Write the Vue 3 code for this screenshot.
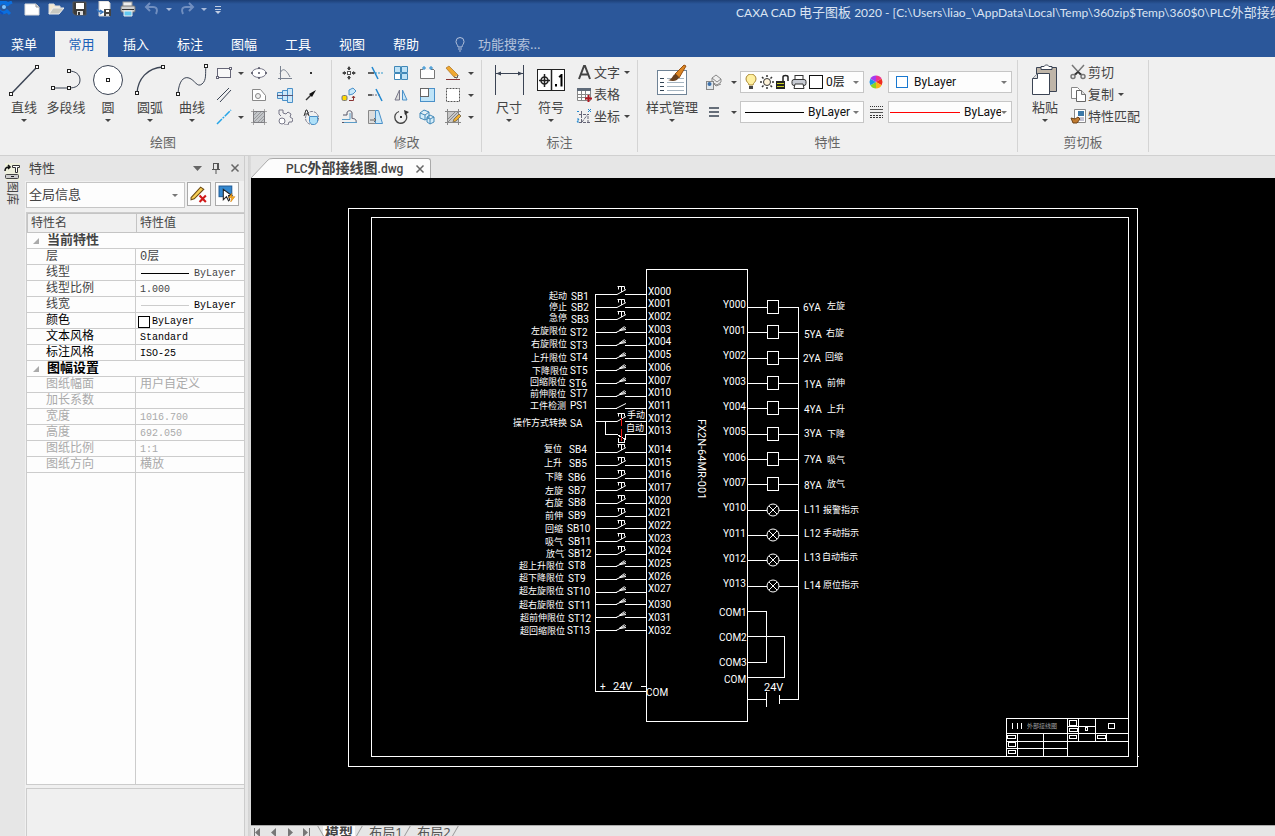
<script setup>
import { ref } from 'vue'

const tabs = ['菜单', '常用', '插入', '标注', '图幅', '工具', '视图', '帮助']
const activeTab = ref('常用')

const node = (x, y) => `<rect x="${x - 1.5}" y="${y - 1.5}" width="3" height="3" fill="#fff" stroke="#222"/>`
const ink = 'fill="none" stroke="#3b4454"'
const gray = 'fill="none" stroke="#7a8290"'
const blue = 'fill="#cfe8f8" stroke="#4a90c8"'

const icons = {
  logo: '<path d="M1 3a7 7 0 0 1 10 0M10 3l5-2M11 5a5 5 0 1 0-1 5l3 3" fill="none" stroke="#0b6fe0" stroke-width="3"/><circle cx="7" cy="6" r="2" fill="#7fc4ff"/><path d="M2 10l4 3M0 6l3 1" stroke="#0d4fc0" stroke-width="2"/>',
  newFile: '<path d="M1 3h11l3 3v8H1z" fill="#fff" stroke="#dcdcdc"/><path d="M12 3v3h3" fill="#ddd" stroke="#999"/>',
  open: '<path d="M1 13V3h5l1 2h5v3" fill="#f4e8d0" stroke="#ddd"/><path d="M1 13l4-6h11l-5 6z" fill="#c8c8c0" stroke="#eee"/>',
  save: '<path d="M1 1h13v13H3l-2-2z" fill="#3c3c3c" stroke="#555"/><rect x="4" y="2" width="8" height="6" fill="#fff"/><rect x="5" y="10" width="6" height="4" fill="#ddd"/><rect x="6" y="11" width="2" height="3" fill="#333"/>',
  saveAs: '<path d="M3 0h9l2 2v13H3z" fill="#fff" stroke="#ccc"/><path d="M1 8c1 3 3 3 5 3M4 9l3 2-3 2" fill="none" stroke="#3a78c0" stroke-width="1.5"/><rect x="8" y="8" width="7" height="7" fill="#444"/><rect x="10" y="9" width="3" height="2" fill="#fff"/><rect x="10" y="13" width="3" height="2" fill="#ddd"/>',
  printer: '<rect x="3" y="1" width="9" height="5" fill="#eee" stroke="#999"/><rect x="1" y="5" width="14" height="6" rx="1" fill="#d0d0d0" stroke="#777"/><rect x="2" y="8" width="12" height="1" fill="#333"/><path d="M4 10h8v5H4z" fill="#62c8f0" stroke="#eee"/>',
  undo: '<path d="M6 2L2 6l4 4M2 6h7c4 0 5 3 3 7" fill="none" stroke="#718fc0" stroke-width="2"/>',
  redo: '<path d="M10 2l4 4-4 4M14 6H7C3 6 2 9 4 13" fill="none" stroke="#718fc0" stroke-width="2"/>',
  custom: '<path d="M5 5.500h6M5 8.500h6" stroke="#c3cfe4"/><path d="M5 10h6l-3 3z" fill="#c3cfe4"/>',
  bulb: '<path d="M6 11c0-2-2-3-2-5.500a4 4 0 0 1 8 0C12 8 10 9 10 11zM6 13h4M7 15h2" fill="none" stroke="#b4c2dc"/>',

  line: `<path d="M4 29L29 3" ${ink} stroke-width="1.500"/>${node(3, 30)}${node(29, 3)}`,
  polyline: `<path d="M3 24H19c6 0 11-2 11-8s-5-9-11-9" ${ink}/>${node(3, 24)}${node(19, 24)}${node(19, 7)}`,
  circle: `<circle cx="16" cy="16" r="14.500" fill="#fff" stroke="#3b4454"/>${node(16, 16)}`,
  arc: `<path d="M3 29C4 15 13 4 29 3" ${ink} stroke-width="1.300"/>${node(3, 29)}${node(29, 3)}`,
  spline: `<path d="M2 29C3 18 7 12 13 14S21 24 26 20 29 9 30 2" ${ink}/>${node(2, 30)}${node(30, 2)}`,
  rect: `<rect x="1.500" y="3.500" width="13" height="9" fill="#f8f8f8" stroke="#667"/><rect x="0.500" y="11.500" width="2" height="2" fill="#fff" stroke="#667"/><rect x="13.500" y="2.500" width="2" height="2" fill="#fff" stroke="#667"/>`,
  ellipse: '<ellipse cx="8" cy="8" rx="7" ry="4.500" fill="#fff" stroke="#778"/><path d="M7 3h2M7 13h2M1 7v2M15 7v2M8 7v2" stroke="#556" stroke-width="1.500"/>',
  curve: `<path d="M3.500 1v14M1 13.500h14M3 9c2-7 6-5 10 3" ${gray}/>`,
  point: '<rect x="7" y="7" width="2" height="2" fill="#333"/>',
  parallel: `<path d="M1 13L13 1M4 15L15 3" ${ink}/>`,
  contour: `<path d="M1.500 2.500h8l5 6v5h-13z" fill="#fff" stroke="#888"/><circle cx="7" cy="9" r="2.500" fill="#eee" stroke="#888"/>`,
  shaft: `<path d="M0.500 5.500h5v6h-5zM5.500 3.500h5v10h-5zM10.500 1.500h5v14h-5z" ${blue}/><path d="M0 8.500h16" stroke="#557"/>`,
  arrow: '<path d="M3 13l5-5" stroke="#333" stroke-width="1.500"/><path d="M13 3L6 7l3 3z" fill="#111"/>',
  ray: '<path d="M1 15L15 1" stroke="#25a5e8" stroke-width="1.500" stroke-dasharray="7 1 2 1"/>',
  hatch: '<rect x="2.500" y="2.500" width="11" height="11" fill="#c2c5c9" stroke="#667"/><path d="M0 2.500h16M0 13.500h16M2.500 0v16M13.500 0v16M3 6l3-3M3 10l7-7M3 13l10-10M7 13l6-6M10 13l3-3" stroke="#888" stroke-width=".7"/>',
  gear: '<path d="M2 1h4v3l3 1 2-2 3 2-1 3 3 2-1 3h-3l-1 3H7" fill="none" stroke="#778"/><path d="M2 1v4l2 2" fill="none" stroke="#778"/><circle cx="5" cy="12" r="3" fill="#fff" stroke="#778"/>',
  detail: '<circle cx="9" cy="9" r="6.500" fill="none" stroke="#778" stroke-dasharray="3 1"/><path d="M6.500 7.500h8v3a4 4 0 0 1-8 2z" fill="#aee0f8" stroke="#4a90c8"/><path d="M1 7l2-6h1l2 6M2 5h3" fill="none" stroke="#333"/>',

  move: '<rect x="6.500" y="6.500" width="3" height="3" fill="#fff" stroke="#555"/><path d="M8 2v3M8 11v3M2 8h3M11 8h3" stroke="#444" stroke-width="2"/><path d="M6 4l2-3 2 3M6 12l2 3 2-3M4 6L1 8l3 2M12 6l3 2-3 2" fill="#444"/>',
  trim: '<path d="M1 8h6" stroke="#333" stroke-width="1.500"/><path d="M8 8h8" stroke="#39c" stroke-dasharray="2 1"/><path d="M5 2l6 12" stroke="#2389d0" stroke-width="1.500"/>',
  array: '<g fill="#bfe2f6" stroke="#4088b8"><path d="M1.500 1.500h6v6h-6zM8.500 1.500h6v6h-6zM8.500 8.500h6v6h-6z"/><path fill="#fff" d="M1.500 8.500h6v6h-6z"/></g>',
  stretch: '<path d="M1.500 5v8.500h14V5M1 4.500h3M12 4.500h3" fill="#fff" stroke="#777"/><path d="M5 1v4M12 1v4M3 3h4M10 3h4" stroke="#2389d0"/>',
  erase: '<path d="M1 3l3-2 9 9-1 3-3-1z" fill="#f0a830" stroke="#a87020" stroke-width=".7"/><path d="M9 12l3 1 1-3" fill="#eddcc4" stroke="#555"/><path d="M1 14.500h14" stroke="#833"/>',
  copyObj: '<rect x="1" y="8.500" width="5" height="5" rx="1.500" fill="#ffd900" stroke="#777"/><path d="M8 3l4-2 3 3-3 3-4 1z" fill="#c5e7fa" stroke="#4a90c8"/><path d="M8 13.500h4.500V9M11 11l1.500-2 1.500 2" fill="none" stroke="#833"/>',
  extend: '<path d="M1 8h4" stroke="#333" stroke-width="1.500"/><path d="M5 8h8" stroke="#667" stroke-dasharray="2 1"/><path d="M9 2l6 12" stroke="#2389d0" stroke-width="1.500"/>',
  mirror: '<path d="M6.500 3v10H2z" fill="#ddd" stroke="#778"/><path d="M9.500 3v10H14z" fill="#c8e6f8" stroke="#4a90c8"/>',
  scale: '<rect x="1.500" y="1.500" width="14" height="13" fill="#bfe4f8" stroke="#4a90c8"/><rect x="1.500" y="1.500" width="8" height="8" fill="#fff" stroke="#666"/>',
  break: '<rect x="1.500" y="1.500" width="13" height="13" fill="#fff" stroke="#555" stroke-dasharray="2 1"/>',
  offset: '<path d="M1 13.500h14c1-4-3-4-4-4V4c0-3-5-3-5 0v2H2" fill="none" stroke="#556"/><path d="M1 10.500h8V4M3 13.500h13" fill="none" stroke="#5b9cc8"/>',
  draft: '<path d="M1.500 1.500h7v13h-7z" fill="#ddd" stroke="#888"/><path d="M8.500 1.500h3l4 13h-7z" fill="#c8e6f8" stroke="#4a90c8"/><path d="M3 11h5M7 9l2 2-2 2" fill="none" stroke="#666"/>',
  rotate: '<path d="M6 2.500A6 6 0 1 0 12 4" fill="none" stroke="#444" stroke-width="1.300"/><path d="M11 1l5 2-4 3z" fill="#333"/><rect x="7" y="7" width="2" height="2" fill="#333"/>',
  block: '<path d="M1 4l4-3 5 2v6l-4 2-5-2zM8 8l3-2 4 2v5l-4 2-3-2zM1 4l5 2 4-3M6 6v5M8 8l3 2 4-2M11 10v5" fill="#d5edfa" stroke="#4389b8"/>',
  editHatch: '<rect x="2.500" y="2.500" width="11" height="11" fill="#c8c8c8" stroke="#666"/><path d="M0 2.500h16M0 13.500h16M2.500 0v16M13.500 0v16M3 10l7-7M3 13l10-10" stroke="#888"/><path d="M9 10l5-5 2 2-5 5-3 1z" fill="#f0b030" stroke="#875"/>',

  dim: `<path d="M2.500 1v30M30.500 1v30M3 9.500h27" ${ink}/><path d="M3 9.500l5-2v4zM30 9.500l-5-2v4z" fill="#3b4454"/>`,
  tol: '<rect x="2.500" y="5.500" width="27" height="21" fill="#fff" stroke="#222"/><path d="M16.500 5v22M4 16.500h11M9.500 10v13" stroke="#222" stroke-width="1.500"/><circle cx="9.500" cy="16.500" r="3.500" fill="none" stroke="#222" stroke-width="1.500"/><path d="M21 20v2.500M26.500 10v12.500M27 11l-3 2" stroke="#000" stroke-width="2" fill="none"/>',
  letterA: '<path d="M3 15L8 2h1l5 13M5 10.500h7" fill="none" stroke="#444" stroke-width="2"/>',
  table: '<path d="M1.500 2.500h13v12h-13z" fill="#fff" stroke="#888"/><path d="M1 2h14v3H1z" fill="#5f6b7a"/><path d="M1 8.500h14M1 11.500h14M5.500 5v10M9.500 5v10" stroke="#888"/><path d="M12.500 9v7M9 12.500h7" stroke="#b01822" stroke-width="2"/>',
  coord: '<path d="M5.500 3v11M3 6.500h10M6 14l6-8v8M3 14.500h12" fill="none" stroke="#667" stroke-dasharray="3 1"/><path d="M1 3l1 1 1-1M12 1l3 3M15 1l-3 3M1 11h2l-2 3h2" fill="none" stroke="#2389d0"/>',
  style: '<rect x="1.500" y="6.500" width="29" height="24" fill="#fff" stroke="#6f8396"/><path d="M4 14.500h4M4 18.500h4M4 22.500h4M4 26.500h4" stroke="#345"/><path d="M11 14.500h17M11 18.500h17M11 22.500h17M11 26.500h17" stroke="#a5b4c0"/><path d="M19 10l9-9 2 1-7 12z" fill="#d98422" stroke="#974f10"/><path d="M12 16c5 0 4-6 8-6l3 3c-1 4-6 5-11 3z" fill="#68401f"/>',
  layers: '<path d="M6 4l4-3 5 4-4 3zM6 4v4l5 3 4-3V5M7 9l3 3 5-2" fill="#eee" stroke="#888"/><rect x="0.500" y="7.500" width="7" height="8" fill="#e0e6ea" stroke="#888"/><circle cx="3.500" cy="10" r="2" fill="#3c6fa8"/>',
  weight: '<path d="M3 4h10M3 8h10M3 12h10" stroke="#394352" stroke-width="1.500"/>',
  linetype: '<path d="M2 2.500h13" stroke="#333" stroke-dasharray="1 1"/><path d="M2 5.500h13M2 8.500h13" stroke="#555"/><path d="M2 11.500h13M2 13.500h13" stroke="#333" stroke-dasharray="2 1"/>',
  lamp: '<path d="M6 11c0-2-3-3-3-6a5 5 0 0 1 10 0c0 3-3 4-3 6z" fill="#fff0a0" stroke="#a88632"/><path d="M6 12h4v3H6z" fill="#444"/>',
  sun: '<circle cx="8" cy="8" r="3.500" fill="#fff4da" stroke="#333"/><path d="M8 1v2M8 13v2M1 8h2M13 8h2M3 3l1.500 1.500M11.500 11.500L13 13M3 13l1.500-1.500M11.500 4.500L13 3" stroke="#333" stroke-width="1.500"/>',
  lock: '<path d="M1 7h9v8H1z" fill="#222"/><path d="M2 9.500h7M2 12.500h7" stroke="#c7cf22"/><path d="M8 7V3c0-2 5-2 5 0v4" fill="none" stroke="#222" stroke-width="1.500"/>',
  print2: '<rect x="4" y="1.500" width="8" height="5" fill="#fff" stroke="#333"/><rect x="1" y="5.500" width="14" height="6" rx="2" fill="#c7cbd3" stroke="#333"/><path d="M4 10h8l1 4.500H3z" fill="#fff" stroke="#333"/>',
  wheel: '<g transform="translate(8 8)"><path d="M0 0V-6.500A6.500 6.500 0 0 1 5.600-3.200z" fill="#ee3390"/><path d="M0 0L5.600-3.200A6.500 6.500 0 0 1 5.600 3.200z" fill="#ef2c20"/><path d="M0 0L5.600 3.200A6.500 6.500 0 0 1 0 6.500z" fill="#fbb515"/><path d="M0 0V6.500A6.500 6.500 0 0 1-5.600 3.200z" fill="#8bd424"/><path d="M0 0L-5.600 3.200A6.500 6.500 0 0 1-5.600-3.200z" fill="#1c93e8"/><path d="M0 0L-5.600-3.200A6.500 6.500 0 0 1 0-6.500z" fill="#a43cf0"/></g>',

  paste: '<path d="M7.500 3.500h20v24h-20z" fill="#bfb5a8" stroke="#3b4454"/><path d="M12 2.500h3c1-2 4-2 5 0h3v3H12z" fill="#fff" stroke="#3b4454"/><path d="M8.500 9.500h12v21h-17v-16z" fill="#fff" stroke="#3b4454"/><path d="M8.500 9.500v5h-5" fill="#ddd" stroke="#3b4454"/>',
  cut: '<path d="M2 1l9 10M14 1L5 11" stroke="#777" stroke-width="1.500"/><circle cx="3" cy="12.500" r="2" fill="#eee" stroke="#777" stroke-width="1.500"/><circle cx="13" cy="12.500" r="2" fill="#eee" stroke="#777" stroke-width="1.500"/><path d="M4 10l4-3 4 3-2 1-2-2-2 2z" fill="#333"/>',
  copy: '<path d="M1.500 1.500h6l2 2v9h-8z" fill="#fff" stroke="#888"/><path d="M6.500 4.500h5l4 4v7h-9z" fill="#fff" stroke="#666"/><path d="M11.500 4.500v4h4" fill="#ddd" stroke="#777"/>',
  match: '<path d="M4.500 1.500h11v13h-11z" fill="#fff" stroke="#888"/><rect x="8" y="3" width="6" height="5" fill="#3c78a8"/><path d="M7 10h7M10 12h4" stroke="#88a"/><path d="M1 10l4 1 3-2 2 2-3 4H3z" fill="#c07a30" stroke="#6f4315"/>',

  pencilX: '<path d="M1 12L10 2l3 2-9 9-3 1z" fill="#f8cf55" stroke="#6b4a13"/><path d="M9 10l6 6M15 10l-6 6" stroke="#d01818" stroke-width="2"/>',
  pick: '<rect x="1" y="1" width="12" height="10" fill="#3388d0" stroke="#1f5c98"/><path d="M5 4v10l3-3 2 4 1-1-1-4h3z" fill="#fff" stroke="#222"/><path d="M13 8l-3 4h3l-1 4 4-5h-3z" fill="#ffb020" stroke="#d07800" stroke-width=".5"/>',
  tee: '<rect x="1" y="0" width="15" height="17" fill="#eef0dc"/><path d="M1 8c0-3 1-4 4-4M4 2l2 2-2 2" fill="none" stroke="#111" stroke-width="1.500"/><path d="M8.500 2.500h7v2h-2v5h-2v-5h-3z" fill="#fff" stroke="#333"/><rect x="1.500" y="11.500" width="13" height="4" rx="1" fill="#ccc" stroke="#444"/><path d="M7 13.500h3" stroke="#222"/>',
  pin: '<path d="M5.500 3v6M10.500 3v6M5 3.500h6M4 9.500h8M8 10v4M9.500 4v5" fill="none" stroke="#555"/>',
  close: '<path d="M4.500 4.500l7 7M11.500 4.500l-7 7" stroke="#666" stroke-width="1.500"/>',
  down: '<path d="M4 6h9l-4.500 5z" fill="#666"/>',
  navFirst: '<path d="M3.500 3v9" stroke="#777"/><path d="M9 3v9L4 7.500z" fill="#777"/>',
  navPrev: '<path d="M9 3v9L4 7.500z" fill="#777"/>',
  navNext: '<path d="M5 3v9l5-4.500z" fill="#777"/>',
  navLast: '<path d="M10.500 3v9" stroke="#777"/><path d="M4 3v9l5-4.500z" fill="#777"/>'
}

const quick = ['newFile', 'open', 'save', 'saveAs', 'printer']
const drawBig = [
  ['直线', 'line', true], ['多段线', 'polyline', false], ['圆', 'circle', true],
  ['圆弧', 'arc', true], ['曲线', 'spline', true]
]
const drawSmall = [
  'rect', 'v', 'ellipse', 'curve', 'point',
  'parallel', '', 'contour', 'shaft', 'arrow',
  'ray', 'v', 'hatch', 'gear', 'detail'
]
const editSmall = [
  'move', 'trim', 'array', 'stretch', 'erase', 'v',
  'copyObj', 'extend', 'mirror', 'scale', 'break', 'v',
  'offset', 'draft', 'rotate', 'block', 'editHatch', 'v'
]

const rows = [
  { group: '当前特性' },
  { name: '层', value: '0层' },
  { name: '线型', value: 'ByLayer', line: 'dark' },
  { name: '线型比例', value: '1.000' },
  { name: '线宽', value: 'ByLayer', line: 'light', tone: 'mixed' },
  { name: '颜色', value: 'ByLayer', swatch: true, tone: 'strong' },
  { name: '文本风格', value: 'Standard', tone: 'strong' },
  { name: '标注风格', value: 'ISO-25', tone: 'strong' },
  { group: '图幅设置', tone: 'strong' },
  { name: '图纸幅面', value: '用户自定义', tone: 'off' },
  { name: '加长系数', value: '', tone: 'off' },
  { name: '宽度', value: '1016.700', tone: 'off' },
  { name: '高度', value: '692.050', tone: 'off' },
  { name: '图纸比例', value: '1:1', tone: 'off' },
  { name: '图纸方向', value: '横放', tone: 'off' }
]
const isLatin = (s) => /^[\x20-\x7e]*$/.test(s)

// PLC inputs: terminal, terminal y, wire y, kind, name, name x, name y, device, device x, device y
const inputs = [
  ['X000', 292, 294, 'b', '起动', 549, 296, 'SB1', 571, 297],
  ['X001', 304, 307, 'b', '停止', 549, 307, 'SB2', 571, 308],
  ['X002', 317, 319, 'b', '急停', 549, 318, 'SB3', 571, 320],
  ['X003', 330, 332, 's', '左旋限位', 531, 331, 'ST2', 570, 333],
  ['X004', 342, 345, 's', '右旋限位', 531, 344, 'ST3', 570, 346],
  ['X005', 355, 358, 's', '上升限位', 531, 358, 'ST4', 570, 358],
  ['X006', 368, 370, 's', '下降限位', 532, 371, 'ST5', 570, 371],
  ['X007', 381, 383, 's', '回缩限位', 530, 382, 'ST6', 569, 384],
  ['X010', 393, 396, 's', '前伸限位', 530, 394, 'ST7', 570, 394],
  ['X011', 406, 408, 'p', '工件检测', 530, 406, 'PS1', 570, 406],
  ['X012', 419, 421, 'b', '操作方式转换', 513, 423, 'SA', 570, 424],
  ['X013', 431, 434, '', '', 0, 0, '', 0, 0],
  ['X014', 450, 452, 'b', '复位', 544, 449, 'SB4', 569, 450],
  ['X015', 463, 465, 'b', '上升', 544, 463, 'SB5', 569, 464],
  ['X016', 475, 478, 'b', '下降', 545, 477, 'SB6', 568, 478],
  ['X017', 488, 490, 'b', '左旋', 545, 491, 'SB7', 568, 491],
  ['X020', 501, 503, 'b', '右旋', 545, 503, 'SB8', 568, 503],
  ['X021', 513, 516, 'b', '前伸', 545, 516, 'SB9', 568, 516],
  ['X022', 526, 528, 'b', '回缩', 545, 529, 'SB10', 567, 529],
  ['X023', 539, 541, 'b', '吸气', 545, 542, 'SB11', 568, 542],
  ['X024', 551, 554, 'b', '放气', 546, 554, 'SB12', 568, 554],
  ['X025', 564, 566, 's', '超上升限位', 519, 566, 'ST8', 568, 566],
  ['X026', 577, 579, 's', '超下降限位', 519, 578, 'ST9', 568, 579],
  ['X027', 589, 592, 's', '超左旋限位', 519, 591, 'ST10', 567, 592],
  ['X030', 605, 604, 's', '超右旋限位', 519, 605, 'ST11', 568, 606],
  ['X031', 618, 617, 's', '超前伸限位', 520, 618, 'ST12', 568, 619],
  ['X032', 631, 630, 's', '超回缩限位', 520, 631, 'ST13', 567, 631]
]
const symbols = {
  b: 'M617 .5L626-4.500M617.500-7.500H624.500M618.500-7.500V-4.500M621.500-7.500V-2M624.500-7.500V-4.500',
  s: 'M616 .5L626-4.500M619-1.500L624.500-5.500M620-1.500L626-2.500',
  p: 'M616 .5L626-4.500'
}

// PLC outputs: terminal, terminal y, wire y, device, device x, device y, name, name x, name y
const outputs = [
  ['Y000', 304, 307, '6YA', 803, 308, '左旋', 827, 306],
  ['Y001', 330, 332, '5YA', 804, 335, '右旋', 826, 333],
  ['Y002', 355, 358, '2YA', 803, 359, '回缩', 825, 357],
  ['Y003', 381, 383, '1YA', 804, 385, '前伸', 827, 383],
  ['Y004', 406, 408, '4YA', 804, 410, '上升', 827, 409],
  ['Y005', 431, 434, '3YA', 804, 434, '下降', 827, 434],
  ['Y006', 457, 459, '7YA', 804, 460, '吸气', 827, 460],
  ['Y007', 482, 484, '8YA', 804, 486, '放气', 827, 484],
  ['Y010', 507, 510, 'L11', 804, 510, '报警指示', 823, 510],
  ['Y011', 533, 535, 'L12', 804, 534, '手动指示', 823, 533],
  ['Y012', 558, 560, 'L13', 804, 558, '自动指示', 822, 557],
  ['Y013', 583, 586, 'L14', 804, 586, '原位指示', 823, 585]
]
const commons = [['COM1', 719, 612], ['COM2', 719, 637], ['COM3', 719, 662], ['COM', 724, 679]]
const cells = [
  [1069.5, 720.5, 7, 5], [1069.5, 728.5, 8, 3], [1069.5, 735.5, 7, 3], [1085.5, 727.5, 2, 3],
  [1108.5, 723.5, 6, 5], [1097.5, 735.5, 8, 3], [1007.5, 735.5, 8, 3], [1008.5, 742.5, 7, 4], [1008.5, 750.5, 7, 3]
]
</script>

<template>
  <div class="app">
    <header class="titlebar">
      <svg class="i16 logo" viewBox="0 0 16 16" v-html="icons.logo"></svg>
      <div class="quick">
        <button v-for="q in quick" :key="q" :aria-label="q"><svg class="i16" viewBox="0 0 16 16" v-html="icons[q]"></svg></button>
        <button aria-label="undo"><svg class="i16" viewBox="0 0 16 16" v-html="icons.undo"></svg></button>
        <button class="narrow" aria-label="undo list"><i class="tri pale"></i></button>
        <button aria-label="redo"><svg class="i16" viewBox="0 0 16 16" v-html="icons.redo"></svg></button>
        <button class="narrow" aria-label="redo list"><i class="tri pale"></i></button>
        <button class="narrow" aria-label="customize"><svg class="i16" viewBox="0 0 16 16" v-html="icons.custom"></svg></button>
      </div>
      <h1>CAXA CAD <span>电子图板</span> 2020 - [C:\Users\liao_\AppData\Local\Temp\360zip$Temp\360$0\PLC<span>外部接线图</span></h1>
    </header>

    <nav class="tabs">
      <button v-for="t in tabs" :key="t" :class="{ active: t === activeTab }" @click="activeTab = t">{{ t }}</button>
      <label class="search">
        <svg class="i16" viewBox="0 0 16 16" v-html="icons.bulb"></svg>
        <input type="text" placeholder="功能搜索..." aria-label="功能搜索">
      </label>
    </nav>

    <div class="ribbon">
      <section class="group g-draw">
        <div class="body">
          <button v-for="b in drawBig" :key="b[0]" class="big">
            <svg class="i32" viewBox="0 0 32 32" v-html="icons[b[1]]"></svg>
            <span>{{ b[0] }}</span><i v-if="b[2]" class="tri"></i>
          </button>
          <div class="grid draw-grid">
            <template v-for="(s, n) in drawSmall" :key="n">
              <button v-if="s" :aria-label="s">
                <i v-if="s === 'v'" class="tri"></i>
                <svg v-else class="i16" viewBox="0 0 16 16" v-html="icons[s]"></svg>
              </button>
              <span v-else></span>
            </template>
          </div>
        </div>
        <h2>绘图</h2>
      </section>

      <section class="group g-edit">
        <div class="body">
          <div class="grid edit-grid">
            <button v-for="(s, n) in editSmall" :key="n" :aria-label="s">
              <i v-if="s === 'v'" class="tri"></i>
              <svg v-else class="i16" viewBox="0 0 16 16" v-html="icons[s]"></svg>
            </button>
          </div>
        </div>
        <h2>修改</h2>
      </section>

      <section class="group g-note">
        <div class="body">
          <button class="big"><svg class="i32" viewBox="0 0 32 32" v-html="icons.dim"></svg><span>尺寸</span><i class="tri"></i></button>
          <button class="big"><svg class="i32" viewBox="0 0 32 32" v-html="icons.tol"></svg><span>符号</span><i class="tri"></i></button>
          <div class="list">
            <button><svg class="i16" viewBox="0 0 16 16" v-html="icons.letterA"></svg>文字<i class="tri"></i></button>
            <button><svg class="i16" viewBox="0 0 16 16" v-html="icons.table"></svg>表格</button>
            <button><svg class="i16" viewBox="0 0 16 16" v-html="icons.coord"></svg>坐标<i class="tri"></i></button>
          </div>
        </div>
        <h2>标注</h2>
      </section>

      <section class="group g-prop">
        <div class="body">
          <button class="big wide"><svg class="i32" viewBox="0 0 32 32" v-html="icons.style"></svg><span>样式管理</span><i class="tri"></i></button>
          <div class="props">
            <button aria-label="图层工具"><svg class="i16" viewBox="0 0 16 16" v-html="icons.layers"></svg></button>
            <button aria-label="图层菜单"><i class="tri"></i></button>
            <div class="combo">
              <svg v-for="k in ['lamp', 'sun', 'lock', 'print2']" :key="k" class="i16" viewBox="0 0 16 16" v-html="icons[k]"></svg>
              <i class="box"></i>
              <select aria-label="图层"><option>0层</option></select><i class="tri"></i>
            </div>
            <button aria-label="颜色"><svg class="i16" viewBox="0 0 16 16" v-html="icons.wheel"></svg></button>
            <div class="combo">
              <i class="box blue"></i>
              <select aria-label="颜色选择" class="pad"><option>ByLayer</option></select><i class="tri"></i>
            </div>
            <button aria-label="线宽"><svg class="i16" viewBox="0 0 16 16" v-html="icons.weight"></svg></button>
            <button aria-label="线宽菜单"><i class="tri"></i></button>
            <div class="combo">
              <i class="stroke"></i>
              <select aria-label="线宽选择"><option>ByLayer</option></select><i class="tri"></i>
            </div>
            <button aria-label="线型"><svg class="i16" viewBox="0 0 16 16" v-html="icons.linetype"></svg></button>
            <div class="combo">
              <i class="stroke red"></i>
              <select aria-label="线型选择"><option>ByLayer</option></select><i class="tri"></i>
            </div>
          </div>
        </div>
        <h2>特性</h2>
      </section>

      <section class="group g-clip">
        <div class="body">
          <button class="big"><svg class="i32" viewBox="0 0 32 32" v-html="icons.paste"></svg><span>粘贴</span><i class="tri"></i></button>
          <div class="list">
            <button><svg class="i16" viewBox="0 0 16 16" v-html="icons.cut"></svg>剪切</button>
            <button><svg class="i16" viewBox="0 0 16 16" v-html="icons.copy"></svg>复制<i class="tri"></i></button>
            <button><svg class="i16" viewBox="0 0 16 16" v-html="icons.match"></svg>特性匹配</button>
          </div>
        </div>
        <h2>剪切板</h2>
      </section>
    </div>

    <div class="work">
      <aside class="dock">
        <button>
          <svg class="tee" viewBox="0 0 17 18" v-html="icons.tee"></svg>
          <span>图库</span>
        </button>
      </aside>

      <aside class="panel">
        <div class="panel-head">
          <h2>特性</h2>
          <button aria-label="菜单"><svg class="i16" viewBox="0 0 16 16" v-html="icons.down"></svg></button>
          <button aria-label="固定"><svg class="i16" viewBox="0 0 16 16" v-html="icons.pin"></svg></button>
          <button aria-label="关闭"><svg class="i16" viewBox="0 0 16 16" v-html="icons.close"></svg></button>
        </div>
        <div class="panel-tools">
          <div class="combo info"><select aria-label="选择对象"><option>全局信息</option></select><i class="tri"></i></div>
          <button class="tool" aria-label="清除选择"><svg class="i18" viewBox="0 0 17 17" v-html="icons.pencilX"></svg></button>
          <button class="tool" aria-label="快速选择"><svg class="i18" viewBox="0 0 17 17" v-html="icons.pick"></svg></button>
        </div>
        <div class="sheet">
          <table>
            <thead><tr><th>特性名</th><th>特性值</th></tr></thead>
            <tbody>
              <tr v-for="(r, n) in rows" :key="n" :class="r.tone">
                <th v-if="r.group" colspan="2" class="section"><i class="fold"></i>{{ r.group }}</th>
                <template v-else>
                  <td>{{ r.name }}</td>
                  <td><div class="val" :class="{ latin: isLatin(r.value) }"><i v-if="r.line" class="rule" :class="r.line"></i><i v-if="r.swatch" class="swatch"></i>{{ r.value }}</div></td>
                </template>
              </tr>
            </tbody>
          </table>
          <div class="rest"></div>
        </div>
        <div class="hint"></div>
      </aside>
      <div class="splitter"></div>

      <main class="docs">
        <div class="doc-tabs">
          <svg class="slant" viewBox="0 0 22 20"><path d="M0 20L17 2q1-1.500 5-1.500V20z" fill="#fcfcfc"/><path d="M0 20L17 2q1-1.500 5-1.500" fill="none" stroke="#aaa"/></svg>
          <div class="doc-tab">
            <span class="name">PLC<b>外部接线图</b>.dwg</span>
            <button aria-label="关闭文档"><svg class="i16" viewBox="0 0 16 16" v-html="icons.close"></svg></button>
          </div>
        </div>

        <div class="canvas">
          <svg class="drawing" viewBox="251 178 1024 647" width="1024" height="647">
            <g class="ln">
              <rect x="348.5" y="208.5" width="789" height="558" />
              <rect x="371.5" y="217.5" width="757" height="539" />
              <path d="M1137 756.500h2" />
              <rect x="646.5" y="269.5" width="101" height="452" />
              <path d="M595.500 294V691.500H646M605.500 421.500V434.500H617" />
              <path d="M798.500 307V699.500H780M747 699.500H766.500M766.500 692V707M779.500 695V704" />
              <path d="M747 611.500H766.500V662.500H747M747 636.500H784.500V677.500H747" />
              <path d="M617 434.500L626 440M618 442.500H625M618.500 438V442M624.500 438V442M625.500 434V439" />
            </g>

            <g v-for="r in inputs" :key="r[0]">
              <path class="crisp" :d="`M${r[3] ? 595 : 627} ${r[2] + 0.5}H${r[3] ? 617 : 628}M625 ${r[2] + 0.5}H646`" />
              <path v-if="r[3]" class="sym" :transform="`translate(0 ${r[2]})`" :d="symbols[r[3]]" />
              <text class="en" x="648" :y="r[1] + 3">{{ r[0] }}</text>
              <text v-if="r[4]" class="zh" :x="r[5]" :y="r[6] + 3">{{ r[4] }}</text>
              <text v-if="r[7]" class="en" :x="r[8]" :y="r[9] + 3">{{ r[7] }}</text>
            </g>
            <path class="link" d="M621.500 418V426M621.500 429V441" />
            <rect x="627" y="410" width="18" height="10" />
            <rect x="626" y="423" width="18" height="10" />
            <text class="zh" x="627" y="418">手动</text>
            <text class="zh" x="626" y="431">自动</text>
            <text class="en" x="600" y="690">+</text>
            <text class="lg" x="613" y="690">24V</text>
            <path class="crisp" d="M641 686.500h5" />
            <text class="en" x="646" y="696">COM</text>
            <text class="lg" transform="translate(698 419) rotate(90)">FX2N-64MR-001</text>

            <g v-for="(r, n) in outputs" :key="r[0]">
              <path class="crisp" :d="`M747 ${r[2] + 0.5}H767M779 ${r[2] + 0.5}H798`" />
              <rect v-if="n < 8" class="crisp" x="767.5" :y="r[2] - 6.5" width="11" height="13" />
              <path v-else class="sym" :transform="`translate(773 ${r[2]})`" d="M-6 0a6 6 0 1 0 12 0a6 6 0 1 0-12 0M-4-4L4 4M4-4L-4 4" />
              <text class="en" x="723" :y="r[1] + 4">{{ r[0] }}</text>
              <text class="en" :x="r[4]" :y="r[5] + 3">{{ r[3] }}</text>
              <text class="zh" :x="r[7]" :y="r[8] + 3">{{ r[6] }}</text>
            </g>
            <text v-for="c in commons" :key="c[0]" class="en" :x="c[1]" :y="c[2] + 4">{{ c[0] }}</text>
            <text class="lg" x="764" y="691">24V</text>

            <g class="ln">
              <path d="M1006.500 756V718.500H1128M1006 733.500H1128M1006 741.500H1128M1006 748.500H1067M1067 726.500H1095" />
              <path d="M1067.500 718V756M1095.500 718V741M1078.500 718V741M1017.500 733V756M1043.500 733V756M1106.500 733V741" />
              <path d="M1012.500 723V729M1017.500 723V729M1021.500 723V729" />
              <rect v-for="(c, n) in cells" :key="n" :x="c[0]" :y="c[1]" :width="c[2]" :height="c[3]" />
            </g>
            <text class="tiny" x="1027" y="728">外部接线图</text>
          </svg>
        </div>

        <nav class="layouts">
          <button v-for="k in ['navFirst', 'navPrev', 'navNext', 'navLast']" :key="k" class="nav" :aria-label="k">
            <svg class="i16" viewBox="0 0 16 16" v-html="icons[k]"></svg>
          </button>
          <button class="sheet-tab on">模型</button>
          <button class="sheet-tab">布局1</button>
          <button class="sheet-tab">布局2</button>
        </nav>
      </main>
    </div>
  </div>
</template>

<style>
body { margin: 0; overflow: hidden; }
</style>

<style scoped>
* { box-sizing: border-box; }
.app {
  display: flex; flex-direction: column; height: 100vh; overflow: hidden;
  background: #e6e6e6; color: #444;
  font: 13px/18px "Noto Sans", "Noto Sans CJK SC", sans-serif;
}
button, select, input { font: inherit; color: inherit; border: 0; padding: 0; margin: 0; background: none; }
h1, h2 { margin: 0; font-weight: 400; font-size: 13px; }
button { display: flex; align-items: center; justify-content: center; }
svg { flex: none; display: block; }
.i16 { width: 16px; height: 16px; }
.i18 { width: 18px; height: 18px; }
.i32 { width: 32px; height: 32px; }
.tri { flex: none; width: 0; height: 0; border: 3px solid transparent; border-top-color: #444; border-bottom: 0; }
.tri.pale { border-top-color: #a9bbdb; }

.titlebar {
  display: flex; flex: none; height: 31px; padding-top: 1px; overflow: hidden;
  background: linear-gradient(#1d3f76, #2b579a 4px);
}
.logo { margin-left: -3px; }
.quick { display: flex; height: 16px; margin-left: 7px; }
.quick button { width: 24px; }
.quick .narrow { width: 10px; }
.quick .narrow + button:not(.narrow) { margin-left: 1px; }
.quick .narrow + .narrow { margin-left: 4px; }
h1 { margin-left: auto; flex: 0 0 539px; min-width: 0; overflow: hidden; line-height: 22px; font-size: 12px; font-family: Lato, "Noto Sans CJK SC", sans-serif; color: #dbe4f2; white-space: nowrap; }
h1 span { font-size: 13px; }

.tabs { display: flex; flex: none; height: 26px; background: #2b579a; color: #fff; }
.tabs button { width: 54px; }
.tabs button:first-child { width: 55px; padding-right: 7px; }
.tabs .active { width: 53px; margin-right: 1px; background: #f0f0f0; color: #1a60b8; }
.search { display: flex; align-items: center; gap: 10px; margin-left: 19px; color: #b4c2dc; }
.search input { width: 120px; outline: 0; }
.search input::placeholder { color: #b4c2dc; opacity: 1; }

.ribbon { display: flex; flex: none; height: 99px; padding-top: 3px; background: #f0f0f0; border-bottom: 1px solid #d0d0d0; overflow: hidden; }
.group { flex: none; height: 92px; border-right: 1px solid #d4d4d4; }
.group h2 { text-align: center; color: #666; line-height: 20px; }
.body { display: flex; height: 72px; padding-top: 4px; }
.big { flex-direction: column; justify-content: flex-start; width: 42px; height: 64px; white-space: nowrap; }
.big span { line-height: 22px; height: 23px; }
.wide { width: 56px; }
.grid { display: grid; grid-auto-rows: 22px; margin-top: -2px; }
.draw-grid { grid-template-columns: 22px 12px 24px 28px 24px; }
.edit-grid { grid-template-columns: repeat(5, 26px) 10px; }
.list { display: grid; grid-auto-rows: 22px; margin-top: -3px; justify-items: start; padding-left: 4px; }
.list button { gap: 2px; white-space: nowrap; }
.list .tri { margin-left: 2px; }
.g-draw { width: 332px; }
.g-draw .body { padding-left: 3px; }
.g-draw h2 { padding-right: 5px; }
.g-edit { width: 150px; }
.g-edit .body { padding-left: 4px; }
.g-note { width: 156px; }
.g-note .body, .g-prop .body, .g-clip .body { padding-left: 6px; }
.g-prop { width: 380px; }
.g-clip { width: 131px; }
.props { display: grid; grid-template-columns: 28px 12px 124px 24px 124px; grid-template-rows: 22px 22px; row-gap: 8px; margin-top: 7px; height: 52px; }
.combo { display: flex; align-items: center; min-width: 0; padding: 0 4px 0 2px; background: #fdfdfd; border: 1px solid #c6c6c6; color: #111; font-size: 12px; font-family: Roboto, "Noto Sans CJK SC", sans-serif; }
.combo select { flex: 1; min-width: 0; height: 18px; margin-left: 3px; appearance: none; outline: 0; }
.combo select.pad { margin-left: 6px; }
.combo .tri { border-top-color: #777; }
.box { flex: none; width: 14px; height: 14px; border: 1px solid #111; background: #fff; margin-left: 2px; }
.box.blue { width: 12px; height: 12px; border-color: #1878d0; margin-left: 5px; }
.stroke { flex: none; width: 59px; height: 1px; margin-left: 2px; background: #000; }
.stroke + select { margin-left: 4px; }
.stroke.red { width: 70px; margin-left: -1px; background: #f00; }

.work { display: flex; flex: 1; min-height: 0; }
.dock { flex: none; width: 25px; padding: 7px 0 0 4px; }
.dock button { flex-direction: column; width: 17px; }
.tee { width: 17px; height: 18px; }
.dock span { writing-mode: vertical-rl; text-orientation: sideways; font-size: 12px; line-height: 17px; }
.panel { display: flex; flex-direction: column; flex: none; width: 220px; background: #f0f0f0; border-right: 1px solid #ccc; }
.panel-head { display: flex; align-items: center; height: 25px; padding: 0 0 2px 4px; background: #e6e6e6; }
.panel-head h2 { flex: 1; }
.panel-head button { width: 19px; padding-top: 1px; }
.panel-tools { display: flex; align-items: flex-start; gap: 4px; height: 30px; padding-top: 1px; }
.combo.info { width: 159px; height: 26px; padding-right: 6px; font-size: 13px; color: #444; margin-left: 1px; margin-right: -2px; }
.combo.info select { margin-left: 0; }
.tool { width: 24px; height: 24px; background: #fdfdfd; border: 1px solid #aaa; }
.sheet { display: flex; flex-direction: column; flex: 1; min-height: 0; margin: 1px 0 0 1px; border: 1px solid #ccc; border-right: 0; background: #fdfdfd; }
table { border-collapse: separate; border-spacing: 0; width: 100%; table-layout: fixed; font: 12px/13px "Liberation Mono", "Noto Sans CJK SC", monospace; text-align: left; }
thead th { height: 20px; padding: 2px 0 0 3px; font-weight: 400; background: #f0f0f0; border: 1px solid #c4c4c4; border-width: 1px 0 1px 1px; }
thead th:first-child { width: 109px; }
tbody td, tbody th { height: 16px; padding: 2px 0 0; border-bottom: 1px solid #ccc; white-space: nowrap; overflow: hidden; }
tbody td:first-child { padding-left: 19px; border-right: 1px solid #ccc; }
.val { display: flex; align-items: center; height: 13px; padding-left: 4px; }
.latin { font-size: 10px; }
.rule { width: 48px; height: 1px; margin: 0 5px 0 1px; }
.rule.dark { background: #000; }
.rule.light { background: #ccc; }
.swatch { width: 12px; height: 12px; margin: 0 2px 0 -2px; border: 1px solid #000; }
tbody .section { padding-top: 1px; font-weight: 700; font-size: 13px; line-height: 14px; }
.fold { display: inline-block; margin: 0 8px 0 6px; border: 3px solid #aaa; border-top-color: transparent; border-left-color: transparent; }
.strong { color: #000; }
.mixed td:last-child { color: #000; }
.off { color: #aaa; }
.rest { flex: 1; width: 109px; border-right: 1px solid #ccc; }
.hint { flex: none; height: 48px; margin: 3px 0 0 1px; border: 1px solid #ccc; border-width: 1px 0 0 1px; }
.splitter { flex: none; width: 6px; background: linear-gradient(90deg, #e6e6e6 3px, #d2d2d2 3px, #dcdcdc); }

.docs { display: flex; flex-direction: column; flex: 1; min-width: 0; }
.doc-tabs { display: flex; flex: none; height: 22px; padding-top: 2px; }
.slant { width: 22px; height: 20px; }
.doc-tab { display: flex; align-items: center; height: 20px; padding: 0 2px 0 13px; background: #fcfcfc; border: 1px solid #aaa; border-width: 1px 1px 0 0; border-radius: 0 3px 0 0; }
.name { font: 500 12px/18px Roboto, "Noto Sans CJK SC", sans-serif; margin-right: 9px; }
.name b { font-size: 14px; }
.canvas { flex: 1; min-height: 0; overflow: hidden; background: #000; }
.drawing { fill: none; stroke: none; }
.drawing rect { fill: #000; }
.ln, .crisp { stroke: #fff; shape-rendering: crispEdges; fill: none; }
.ln rect { fill: none; stroke: #fff; }
.sym { stroke: #fff; }
.link { stroke: #f01818; shape-rendering: crispEdges; }
.drawing text { fill: #fff; }
.en { font: 10px Roboto, sans-serif; }
.lg { font: 11px Roboto, sans-serif; }
.zh { font: 9px "Noto Sans CJK SC", sans-serif; }
.tiny { font: 6px "Noto Sans CJK SC", sans-serif; opacity: .6; }

.layouts { display: flex; flex: none; height: 11px; border-top: 1px solid #aaa; overflow: hidden; }
.layouts button { height: 13px; align-items: center; }
.nav { width: 16px; padding-top: 1px; }
.layouts .sheet-tab { position: relative; width: 48px; color: #555; line-height: 13px; }
.sheet-tab::after { content: ""; position: absolute; top: 0; right: 3px; height: 13px; border-right: 1px solid #999; transform: skewX(-30deg); }
.layouts .on { width: 46px; margin-left: 1px; font-weight: 700; font-size: 14px; color: #444; background: linear-gradient(#fcfcfc, #fcfcfc) 7px 0 / 32px 13px no-repeat; }
.on::before { content: ""; position: absolute; top: 0; left: 5px; height: 13px; border-left: 1px solid #999; transform: skewX(30deg); }
</style>
